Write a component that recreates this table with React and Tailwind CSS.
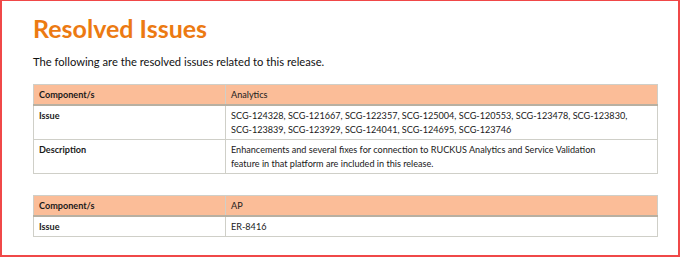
export default function App() {
  const font = { fontFamily: "Lato, 'Open Sans', sans-serif" };
  const Table = ({ head, rows }) => (
    <table className="w-[625px] border-collapse text-[9.1px] leading-[14px] text-[#1a1a1a]">
      <colgroup>
        <col className="w-[192px]" />
        <col />
      </colgroup>
      <thead>
        <tr className="bg-[#fbbd98]">
          <th className="border border-[#cfcfc8] border-b-2 border-b-[#b8b0a2] pl-[5px] pr-[12px] pt-[3px] pb-[2px] text-left font-bold">Component/s</th>
          <th className="border border-[#cfcfc8] border-b-2 border-b-[#b8b0a2] pl-[5px] pr-[12px] pt-[3px] pb-[2px] text-left font-normal">{head}</th>
        </tr>
      </thead>
      <tbody>
        {rows.map(([k, v]) => (
          <tr key={k}>
            <td className="border border-[#cfcfc8] pl-[5px] pr-[12px] pt-[3px] pb-[2px] align-top font-bold">{k}</td>
            <td className="border border-[#cfcfc8] pl-[5px] pr-[12px] pt-[3px] pb-[2px] align-top">{v}</td>
          </tr>
        ))}
      </tbody>
    </table>
  );
  return (
    <div style={font} className="w-[680px] h-[257px] bg-white border-[#f04848] border-t border-l-2 border-r-2 border-b-2 box-border overflow-hidden">
      <div className="pl-[31px] pt-[12px]">
        <h1 className="text-[25px] leading-[30px] font-bold text-[#ec7a12]">Resolved Issues</h1>
        <p className="mt-[12px] text-[11.2px] leading-[14px] text-[#111]">The following are the resolved issues related to this release.</p>
        <div className="mt-[15px]">
          <Table
            head="Analytics"
            rows={[
              ["Issue", "SCG-124328, SCG-121667, SCG-122357, SCG-125004, SCG-120553, SCG-123478, SCG-123830, SCG-123839, SCG-123929, SCG-124041, SCG-124695, SCG-123746"],
              ["Description", <div className="max-w-[385px]">Enhancements and several fixes for connection to RUCKUS Analytics and Service Validation feature in that platform are included in this release.</div>],
            ]}
          />
        </div>
        <div className="mt-[21px]">
          <Table head="AP" rows={[["Issue", "ER-8416"]]} />
        </div>
      </div>
    </div>
  );
}
